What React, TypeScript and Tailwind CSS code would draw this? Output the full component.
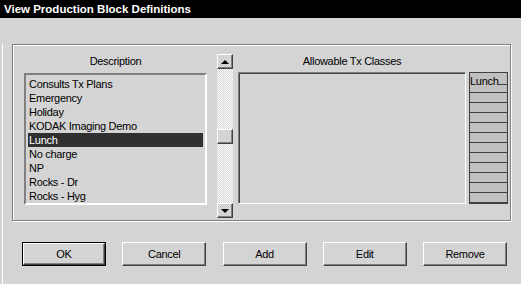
import React from 'react';

const items = [
  'Consults Tx Plans',
  'Emergency',
  'Holiday',
  'KODAK Imaging Demo',
  'Lunch',
  'No charge',
  'NP',
  'Rocks - Dr',
  'Rocks - Hyg',
];

const buttons = ['OK', 'Cancel', 'Add', 'Edit', 'Remove'];

const raised =
  'border border-t-white border-l-white border-r-[#404040] border-b-[#404040] shadow-[inset_-1px_-1px_0_#808080]';

const ScrollButton: React.FC<{ up?: boolean }> = ({ up }) => (
  <div className={`h-[15px] w-[16px] bg-[#d4d4d4] flex items-center justify-center ${raised}`}>
    {up ? (
      <div className="w-0 h-0 border-x-[4px] border-x-transparent border-b-[4px] border-b-black" />
    ) : (
      <div className="w-0 h-0 border-x-[4px] border-x-transparent border-t-[4px] border-t-black" />
    )}
  </div>
);

const App: React.FC = () => {
  return (
    <div className="w-[521px] h-[284px] bg-[#d4d4d4] overflow-hidden font-['Liberation_Sans',Arial,sans-serif] text-[11px] tracking-[-0.3px] text-black">
      <div className="h-[18px] bg-black text-white font-bold text-[11.5px] leading-[18px] pl-[4px] tracking-normal">
        View Production Block Definitions
      </div>

      <div className="ml-[2px] h-[266px] border-l border-white">
        {/* group box */}
        <div className="ml-[9px] mt-[26px] w-[499px] h-[177px] border border-[#808080] shadow-[inset_1px_1px_0_#fff,1px_1px_0_#fff] pl-[11px] pt-[9px]">
          <div className="flex">
            <div className="w-[183px]">
              <div className="h-[19px] leading-[14px] text-center">Description</div>
              <div className="h-[132px] border-2 border-t-[#808080] border-l-[#808080] border-r-white border-b-white pt-[2px] px-[2px]">
                {items.map((it) => (
                  <div
                    key={it}
                    className={`h-[14px] leading-[14px] pl-[1px] whitespace-nowrap ${
                      it === 'Lunch' ? 'bg-[#303030] text-white' : ''
                    }`}
                  >
                    {it}
                  </div>
                ))}
              </div>
            </div>

            <div className="ml-[10px] w-[16px] h-[164px] flex flex-col">
              <ScrollButton up />
              <div className="h-[60px] bg-[image:repeating-conic-gradient(#ffffff_0%_25%,#d4d4d4_0%_50%)] bg-[length:2px_2px]" />
              <div className={`h-[15px] w-[16px] bg-[#d4d4d4] ${raised}`} />
              <div className="flex-1 bg-[image:repeating-conic-gradient(#ffffff_0%_25%,#d4d4d4_0%_50%)] bg-[length:2px_2px]" />
              <ScrollButton />
            </div>

            <div className="ml-[5px] w-[228px]">
              <div className="h-[18px] leading-[14px] text-center">Allowable Tx Classes</div>
              <div className="h-[132px] border border-t-[#808080] border-l-[#808080] border-r-white border-b-white shadow-[inset_1px_1px_0_#404040]" />
            </div>

            <div className="ml-[3px] mt-[18px] w-[39px] h-[132px] border border-[#404040] border-b-2 bg-[#c0c0c0] flex flex-col">
              <div className="h-[20px] border-b border-[#404040] flex items-start pt-[2px]">
                <span className="leading-[12px]">Lunch</span>
                <div className="flex-1 h-[10px] border-b border-[#404040]" />
              </div>
              {Array.from({ length: 11 }).map((_, i) => (
                <div key={i} className="h-[10px] border-b border-[#404040] last:border-b-0 last:flex-1" />
              ))}
            </div>
          </div>
        </div>

        <div className="mt-[21px] ml-[19px] w-[485px] flex justify-between">
          {buttons.map((b) =>
            b === 'OK' ? (
              <div key={b} className="w-[84px] h-[24px] border border-black">
                <div className={`h-full flex items-center justify-center ${raised}`}>{b}</div>
              </div>
            ) : (
              <div key={b} className={`w-[84px] h-[24px] flex items-center justify-center ${raised}`}>
                {b}
              </div>
            )
          )}
        </div>
      </div>
    </div>
  );
};

export default App;
